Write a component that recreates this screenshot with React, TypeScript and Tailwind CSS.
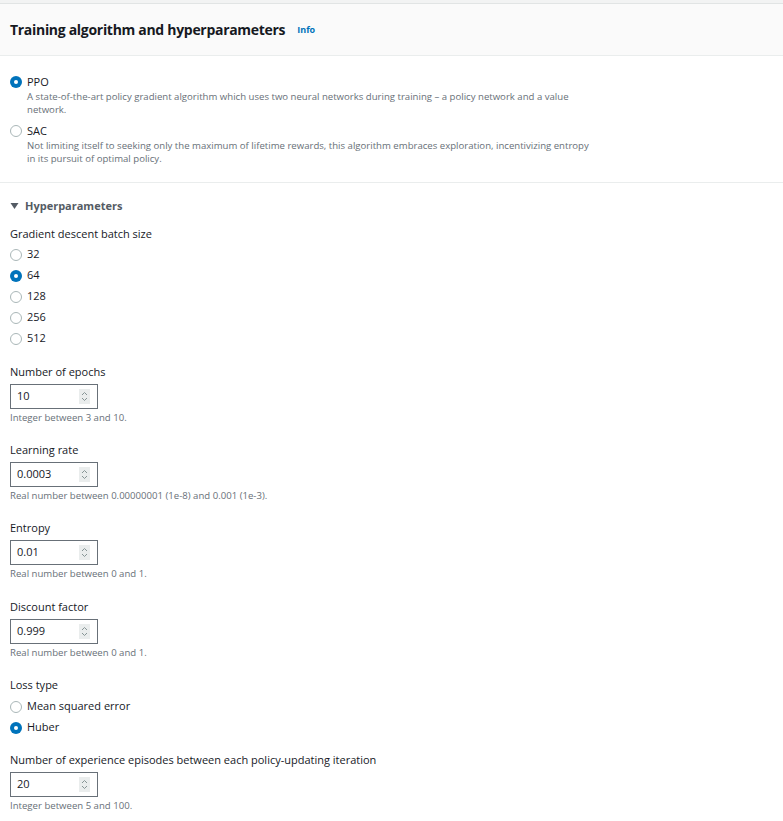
import React from "react";

const font = { fontFamily: '"Open Sans", "Noto Sans", Arial, sans-serif' };

function Radio({ checked }: { checked?: boolean }) {
  return checked ? (
    <span className="w-[12px] h-[12px] rounded-full bg-[#0073bb] flex items-center justify-center shrink-0">
      <span className="block w-[4px] h-[4px] rounded-full bg-white" />
    </span>
  ) : (
    <span className="block w-[12px] h-[12px] rounded-full border border-[#aab7b8] bg-white shrink-0" />
  );
}

function RadioRow({ label, checked }: { label: string; checked?: boolean }) {
  return (
    <div className="h-[21px] flex items-center gap-[5px] text-[11px] text-[#16191f]">
      <Radio checked={checked} />
      <span>{label}</span>
    </div>
  );
}

function Spinner() {
  return (
    <span className="w-[11px] h-[15px] bg-[#eaeded] flex items-center justify-center">
      <svg width="9" height="13" viewBox="0 0 9 13" fill="none" stroke="#879596" strokeWidth="1">
        <path d="M2 5 L4.5 2.5 L7 5" />
        <path d="M2 8 L4.5 10.5 L7 8" />
      </svg>
    </span>
  );
}

function NumField({ label, value, help, gapTop = 18 }: { label: string; value: string; help: string; gapTop?: number }) {
  return (
    <div style={{ marginTop: gapTop }}>
      <div className="h-[16px] leading-[16px] text-[11px] text-[#16191f]">{label}</div>
      <div className="mt-[4px] w-[88px] h-[25px] border border-[#687078] bg-white flex items-center justify-between pl-[6px] pr-[7px]">
        <span className="text-[11px] text-[#16191f]">{value}</span>
        <Spinner />
      </div>
      <div className="mt-[3px] h-[12px] leading-[12px] text-[9.6px] text-[#687078]">{help}</div>
    </div>
  );
}

export default function App() {
  return (
    <div className="w-[783px] h-[821px] bg-white overflow-hidden" style={font}>
      <div className="h-[3px] bg-[#f2f3f3] border-b border-[#e1e4e4] box-content" />
      <div className="h-[52px] bg-[#fafafa] border-b border-[#eaeded] flex items-center px-[10px]">
        <span className="text-[14px] font-bold text-[#16191f] tracking-[-0.3px]">Training algorithm and hyperparameters</span>
        <span className="ml-[12px] text-[9px] font-bold text-[#0073bb]">Info</span>
      </div>
      <div className="px-[10px] pt-[18px] pb-[17px] border-b border-[#eaeded]">
        <div className="flex gap-[5px]">
          <div className="h-[16px] flex items-center"><Radio checked /></div>
          <div>
            <div className="h-[16px] leading-[16px] text-[11px] text-[#16191f]">PPO</div>
            <div className="text-[9.6px] leading-[13px] text-[#687078] w-[570px]">
              A state-of-the-art policy gradient algorithm which uses two neural networks during training – a policy network and a value network.
            </div>
          </div>
        </div>
        <div className="flex gap-[5px] mt-[7px]">
          <div className="h-[16px] flex items-center"><Radio /></div>
          <div>
            <div className="h-[16px] leading-[16px] text-[11px] text-[#16191f]">SAC</div>
            <div className="text-[9.6px] leading-[13px] text-[#687078] w-[570px]">
              Not limiting itself to seeking only the maximum of lifetime rewards, this algorithm embraces exploration, incentivizing entropy in its pursuit of optimal policy.
            </div>
          </div>
        </div>
      </div>
      <div className="px-[10px]">
        <div className="mt-[15px] h-[16px] flex items-center gap-[6px]">
          <svg width="9" height="8" viewBox="0 0 9 8"><path d="M0.5 1 L8.5 1 L4.5 7 Z" fill="#545b64" /></svg>
          <span className="text-[11px] font-bold text-[#545b64]">Hyperparameters</span>
        </div>
        <div className="mt-[12px] h-[16px] leading-[16px] text-[11px] text-[#16191f]">Gradient descent batch size</div>
        <div className="mt-[2px]">
          <RadioRow label="32" />
          <RadioRow label="64" checked />
          <RadioRow label="128" />
          <RadioRow label="256" />
          <RadioRow label="512" />
        </div>
        <NumField gapTop={15} label="Number of epochs" value="10" help="Integer between 3 and 10." />
        <NumField label="Learning rate" value="0.0003" help="Real number between 0.00000001 (1e-8) and 0.001 (1e-3)." />
        <NumField label="Entropy" value="0.01" help="Real number between 0 and 1." />
        <NumField gapTop={19} label="Discount factor" value="0.999" help="Real number between 0 and 1." />
        <div className="mt-[18px] h-[16px] leading-[16px] text-[11px] text-[#16191f]">Loss type</div>
        <div className="mt-[3px]">
          <RadioRow label="Mean squared error" />
          <RadioRow label="Huber" checked />
        </div>
        <NumField gapTop={14} label="Number of experience episodes between each policy-updating iteration" value="20" help="Integer between 5 and 100." />
      </div>
    </div>
  );
}
